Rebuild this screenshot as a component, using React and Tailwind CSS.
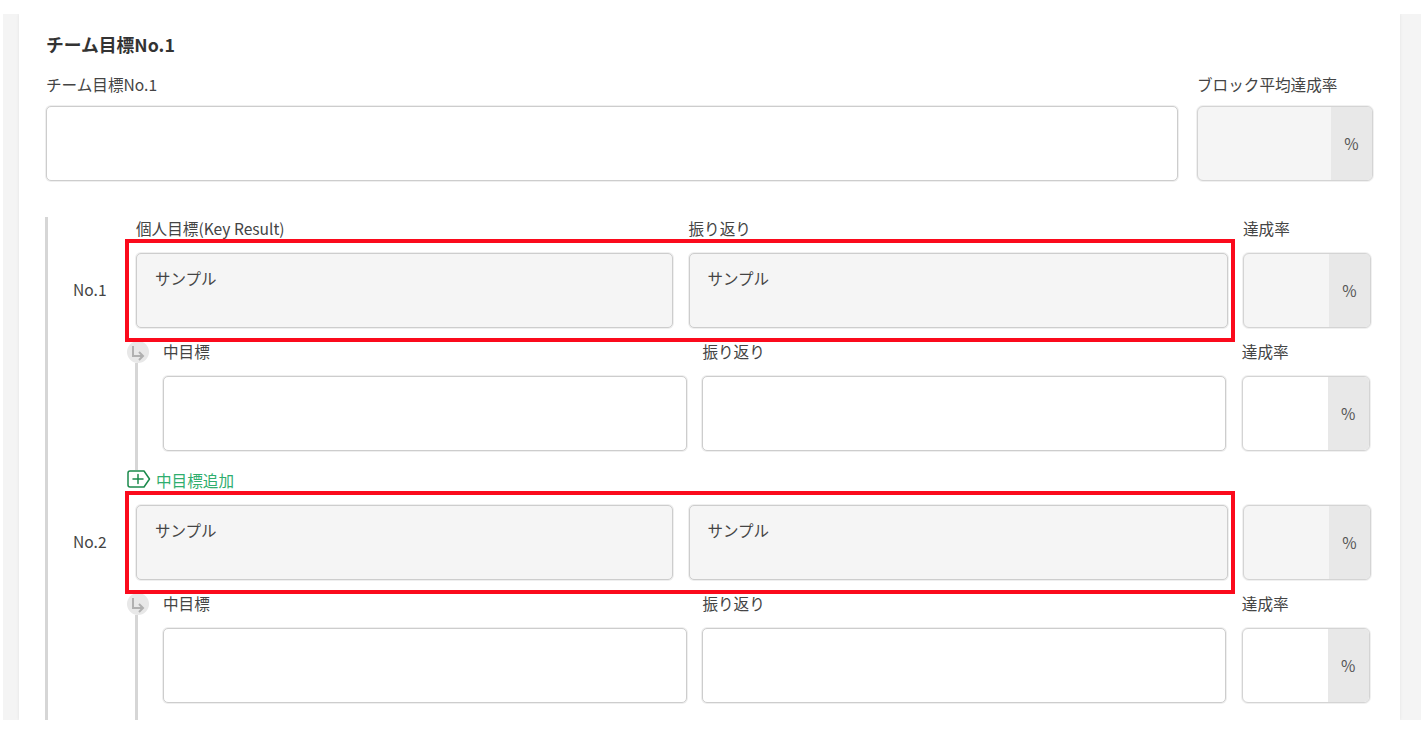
function Label({ children, className = "" }) {
  return <div className={`h-[23px] leading-[23px] text-[15.6px] whitespace-nowrap ${className}`}>{children}</div>;
}

function TextBox({ value, filled }) {
  return (
    <div
      className={`h-[75px] rounded-[5px] border border-[#cdcdcd] pl-[18px] pt-[11px] text-[15.5px] leading-[26px] shadow-[0_0_0_1px_#efefef] ${
        filled ? "bg-[#f5f5f5]" : "bg-white"
      }`}
    >
      {value}
    </div>
  );
}

function RateBox({ filled }) {
  return (
    <div className={`flex h-[75px] overflow-hidden rounded-[6px] border border-[#d4d4d4] shadow-[0_0_0_1px_#f0f0f0] ${filled ? "bg-[#f5f5f5]" : "bg-white"}`}>
      <div className="flex-1" />
      <div className="flex w-[41px] items-center justify-center bg-[#e8e8e8] text-[15.6px] text-[#555]">%</div>
    </div>
  );
}

function KeyResult({ no, showLabels }) {
  return (
    <div className="flex">
      <div className="w-[88px] shrink-0 pl-[25px]">
        {showLabels && <div className="h-[36px]" />}
        <div className="flex h-[75px] items-center pb-[2px] text-[15.6px]">{no}</div>
      </div>
      <div>
        {showLabels && (
          <div className="mb-[13px] grid grid-cols-[537px_539px_128px] gap-x-[15.5px]">
            <Label>個人目標(Key Result)</Label>
            <Label>振り返り</Label>
            <Label>達成率</Label>
          </div>
        )}
        <div className="grid grid-cols-[537px_539px_128px] gap-x-[15.5px]">
          <div className="relative col-span-2 grid grid-cols-[537px_539px] gap-x-[15.5px]">
            <TextBox value="サンプル" filled />
            <TextBox value="サンプル" filled />
            <div className="absolute -bottom-[14px] -left-[11px] -right-[7px] -top-[14px] border-[4px] border-[#fb0a1c]" />
          </div>
          <RateBox filled />
        </div>
      </div>
    </div>
  );
}

function SubGoal({ last }) {
  return (
    <div className="ml-[79px] flex pt-[13px]">
      <div className="flex w-[36px] shrink-0 flex-col items-start">
        <div className="h-[22px] w-[22px] shrink-0 rounded-full bg-[#e8e8e8] pl-[4px] pt-[4px]">
          <svg width="16" height="16" viewBox="0 0 16 16" fill="none" stroke="#b0b0b0" strokeWidth="2">
            <path d="M2 1v10h9" />
            <path d="M8 7l4 4-4 4" />
          </svg>
        </div>
        <div className="ml-[8px] w-[3px] flex-1 bg-[#d6d6d6]" />
      </div>
      <div className={last ? "pb-[17px]" : "pb-[19px]"}>
        <div className="mb-[13px] grid grid-cols-[524px_524px_128px] gap-x-[15.4px]">
          <div className="h-[22px] text-[15.6px] leading-[20px]">中目標</div>
          <div className="h-[22px] text-[15.6px] leading-[20px]">振り返り</div>
          <div className="h-[22px] text-[15.6px] leading-[20px]">達成率</div>
        </div>
        <div className="grid grid-cols-[524px_524px_128px] gap-x-[15.4px]">
          <TextBox />
          <TextBox />
          <RateBox />
        </div>
      </div>
    </div>
  );
}

export default function App() {
  return (
    <div
      className="h-[736px] overflow-hidden bg-white pl-[3px] pt-[14px] text-[#444]"
      style={{ fontFamily: '"Noto Sans CJK JP", "Noto Sans", sans-serif' }}
    >
      <div className="flex h-[706px] w-[1418px] overflow-hidden bg-[#f4f4f4]">
        <div className="ml-[16px] w-[1381px] bg-white pl-[27px] shadow-[0_0_3px_rgba(0,0,0,0.08)]">
          <h2 className="mt-[16px] h-[28px] text-[17.8px] font-bold leading-[28px] text-[#333]">チーム目標No.1</h2>
          <div className="mt-[15px] flex">
            <div className="w-[1132px]">
              <Label className="mb-[10px]">チーム目標No.1</Label>
              <div className="h-[75px] rounded-[5px] border border-[#cdcdcd] bg-white shadow-[0_0_0_1px_#efefef]" />
            </div>
            <div className="ml-[19px] w-[176px]">
              <Label className="mb-[10px]">ブロック平均達成率</Label>
              <RateBox filled />
            </div>
          </div>

          {/* Key results */}
          <div className="-ml-[1px] mt-[36px] border-l-[3px] border-[#d6d6d6]">
            <KeyResult no="No.1" showLabels />
            <SubGoal />
            <div className="ml-[79px] flex h-[21px] items-start">
              <svg width="24" height="18" viewBox="0 0 24 18" fill="none" stroke="#1b8a4c" strokeWidth="1.5" strokeLinejoin="round" strokeLinecap="round">
                <path d="M3 1h14l5.5 8-5.5 8H3a2 2 0 0 1-2-2V3a2 2 0 0 1 2-2z" />
                <path d="M6 9h10M11 4.5v9" />
              </svg>
              <span className="ml-[5px] mt-[-2px] text-[15.6px] leading-[24px] text-[#2fae6e]">中目標追加</span>
            </div>
            <div className="h-[14px]" />
            <KeyResult no="No.2" />
            <SubGoal last />
          </div>
        </div>
      </div>
    </div>
  );
}
